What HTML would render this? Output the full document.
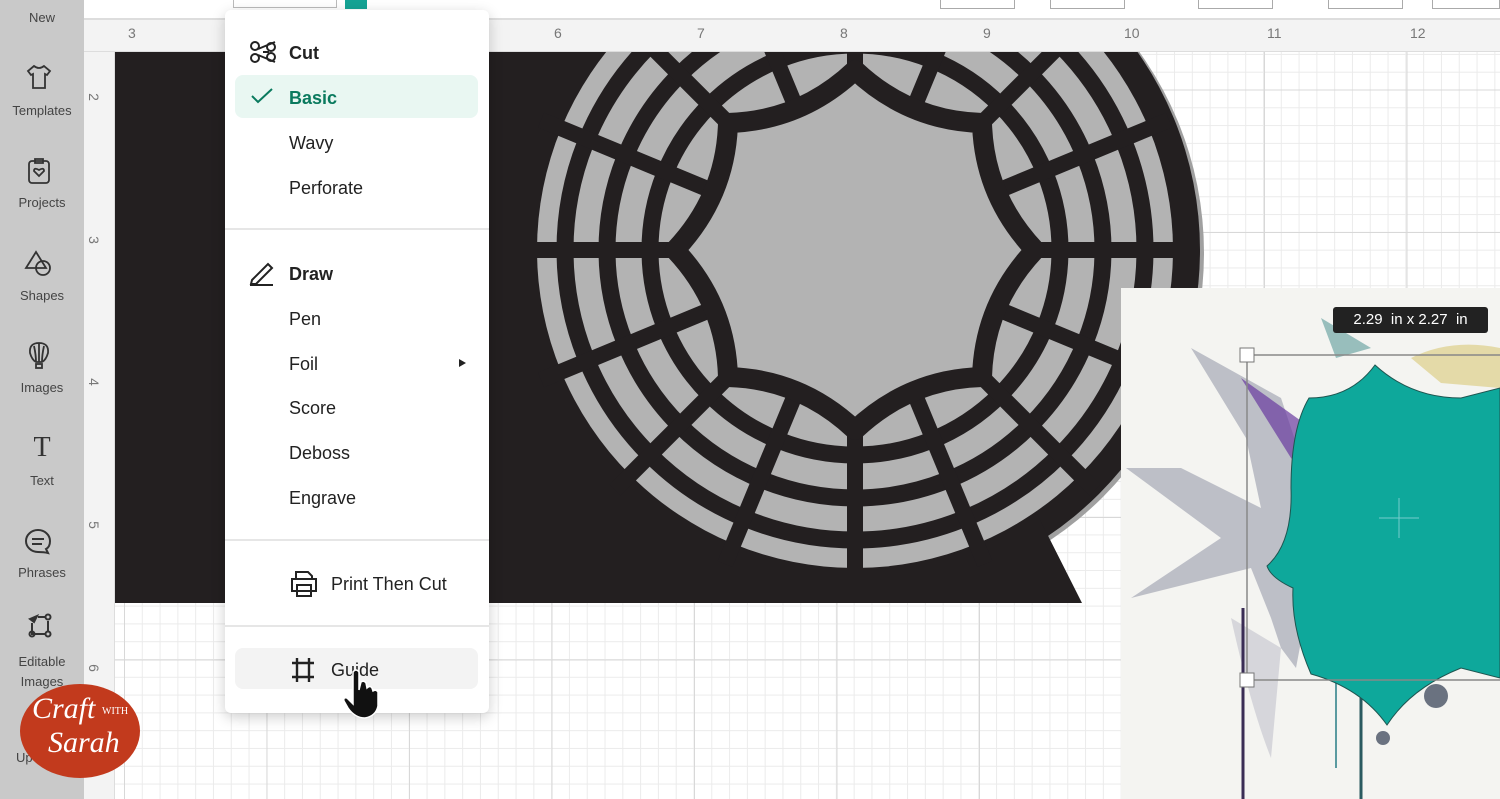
<!DOCTYPE html>
<html><head><meta charset="utf-8"><style>
*{margin:0;padding:0;box-sizing:border-box}
body{width:1500px;height:799px;overflow:hidden;position:relative;font-family:"Liberation Sans",sans-serif;background:#fff}
.canvas{position:absolute;left:115px;top:52px;right:0;bottom:0;
background-color:#fff;
background-image:linear-gradient(to right,#d8d8d8 1px,transparent 1px),linear-gradient(to bottom,#d8d8d8 1px,transparent 1px),linear-gradient(to right,#ebebeb 1px,transparent 1px),linear-gradient(to bottom,#ebebeb 1px,transparent 1px);
background-size:142.5px 142.5px,142.5px 142.5px,17.81px 17.81px,17.81px 17.81px;
background-position:9px 37.5px,9px 37.5px,9px 37.5px,9px 37.5px}
.top{position:absolute;left:84px;top:0;right:0;height:20px;background:#fff;border-bottom:2px solid #ddd}
.rulx{position:absolute;left:84px;top:20px;right:0;height:32px;background:#f3f3f3;border-bottom:1px solid #ddd}
.ruly{position:absolute;left:84px;top:52px;width:31px;bottom:0;background:#f3f3f3;border-right:1px solid #ddd}
.rn{position:absolute;font-size:14px;color:#777}
.ryn{position:absolute;font-size:14px;color:#777;transform:rotate(90deg)}
.side{position:absolute;left:0;top:0;width:84px;height:799px;background:#c9c9c9}
.si{position:absolute;left:0;width:84px;text-align:center;font-size:13px;color:#444}
.menu{position:absolute;left:225px;top:10px;width:264px;height:703px;background:#fff;border-radius:6px;box-shadow:0 4px 14px rgba(0,0,0,.2)}
.mi{position:absolute;left:64px;font-size:18px;color:#222}
.b{font-weight:bold}
.div{position:absolute;left:0;right:0;height:2px;background:#e6e6e6}
.panel{position:absolute;left:1121px;top:288px;width:379px;height:511px;background:#f4f4f1}
</style></head><body>
<div class="canvas"></div>
<svg style="position:absolute;left:0;top:0" width="1500" height="799">
<defs><clipPath id="c"><rect x="115" y="52" width="1385" height="551"/></clipPath></defs>
<g clip-path="url(#c)">
<circle cx="859" cy="253" r="345" fill="#a0a0a0"/>
<circle cx="855" cy="250" r="345" fill="#231f20"/>
<path d="M115 52H1030V500L1082 603H115Z" fill="#231f20"/>
<circle cx="855" cy="250" r="318" fill="#b3b3b3"/>
<g fill="none" stroke="#231f20" stroke-width="17">
<circle cx="855" cy="250" r="205"/>
<circle cx="855" cy="250" r="248"/>
<circle cx="855" cy="250" r="290"/>
</g>
<g stroke="#231f20" stroke-width="16">
<line x1="515" y1="250" x2="1195" y2="250"/>
<line x1="855" y1="-90" x2="855" y2="590"/>
<line x1="615" y1="10" x2="1095" y2="490"/>
<line x1="1095" y1="10" x2="615" y2="490"/>
<line x1="541" y1="120" x2="1169" y2="380"/>
<line x1="541" y1="380" x2="1169" y2="120"/>
<line x1="725" y1="-64" x2="985" y2="564"/>
<line x1="985" y1="-64" x2="725" y2="564"/>
</g>
<path d="M1035 250 Q984 304 982 377 Q909 379 855 430 Q801 379 728 377 Q726 304 675 250 Q726 196 728 123 Q801 121 855 70 Q909 121 982 123 Q984 196 1035 250Z" fill="#b3b3b3" stroke="#231f20" stroke-width="20" stroke-linejoin="round"/>
</g>
</svg>
<div class="top"></div>
<div style="position:absolute;left:233px;top:0;width:104px;height:8px;border:1px solid #bbb;border-top:none;background:#fff"></div>
<div style="position:absolute;left:345px;top:0;width:22px;height:9px;background:#15a394"></div>
<div style="position:absolute;left:940px;top:0;width:75px;height:9px;border:1px solid #aaa;border-top:none"></div>
<div style="position:absolute;left:1050px;top:0;width:75px;height:9px;border:1px solid #aaa;border-top:none"></div>
<div style="position:absolute;left:1198px;top:0;width:75px;height:9px;border:1px solid #aaa;border-top:none"></div>
<div style="position:absolute;left:1328px;top:0;width:75px;height:9px;border:1px solid #aaa;border-top:none"></div>
<div style="position:absolute;left:1432px;top:0;width:68px;height:9px;border:1px solid #aaa;border-top:none"></div>
<div class="rulx">
<span class="rn" style="left:44px;top:5px">3</span>
<span class="rn" style="left:470px;top:5px">6</span>
<span class="rn" style="left:613px;top:5px">7</span>
<span class="rn" style="left:756px;top:5px">8</span>
<span class="rn" style="left:899px;top:5px">9</span>
<span class="rn" style="left:1040px;top:5px">10</span>
<span class="rn" style="left:1183px;top:5px">11</span>
<span class="rn" style="left:1326px;top:5px">12</span>
</div>
<div class="ruly">
<span class="ryn" style="left:6px;top:37px">2</span>
<span class="ryn" style="left:6px;top:180px">3</span>
<span class="ryn" style="left:6px;top:322px">4</span>
<span class="ryn" style="left:6px;top:465px">5</span>
<span class="ryn" style="left:6px;top:608px">6</span>
</div>
<div class="panel">
<svg width="379" height="511" style="position:absolute;left:0;top:0">
<path d="M70 60 L125 150 L140 220 L60 180 L5 180 L100 250 L10 310 L130 280 L150 330 L160 360 L175 380 L190 300 L205 270 L190 200 L160 110Z" fill="#7a7f95" opacity=".45"/>
<path d="M120 90 L170 170 L200 200 L190 140Z" fill="#6a3aa0" opacity=".7"/>
<path d="M110 330 Q130 420 150 470 L160 360Z" fill="#aab" opacity=".4"/>
<line x1="122" y1="320" x2="122" y2="511" stroke="#3a2d55" stroke-width="3"/>
<line x1="240" y1="350" x2="240" y2="511" stroke="#2a5a60" stroke-width="3"/>
<line x1="215" y1="350" x2="215" y2="480" stroke="#5a9aa0" stroke-width="2"/>
<circle cx="315" cy="408" r="12" fill="#6a7280"/>
<circle cx="262" cy="450" r="7" fill="#6a7280"/>
<path d="M290 70 Q330 50 379 60 L379 100 L320 95Z" fill="#d8c878" opacity=".6"/>
<path d="M200 30 L250 60 L215 70Z" fill="#5a9a9a" opacity=".6"/>
<path d="M188 110 Q230 110 254 77 Q290 110 340 110 L379 100 L379 390 L340 380 Q290 400 266 437 Q240 400 190 386 Q170 340 172 300 Q150 290 146 278 Q172 255 170 200 Q170 140 188 110Z" fill="#0ea89b" stroke="#1e5550" stroke-width="1"/>
<line x1="124" y1="67" x2="379" y2="67" stroke="#888" stroke-width="1.5"/>
<line x1="124" y1="392" x2="379" y2="392" stroke="#888" stroke-width="1.5"/>
<line x1="126" y1="67" x2="126" y2="392" stroke="#888" stroke-width="1.5"/>
<rect x="119" y="60" width="14" height="14" fill="#fff" stroke="#777"/>
<rect x="119" y="385" width="14" height="14" fill="#fff" stroke="#777"/>
<line x1="258" y1="230" x2="298" y2="230" stroke="#7cc" stroke-width="1"/>
<line x1="278" y1="210" x2="278" y2="250" stroke="#7cc" stroke-width="1"/>
</svg>
<div style="position:absolute;left:212px;top:19px;width:155px;height:26px;background:#222;border-radius:3px;color:#fff;font-size:15px;line-height:26px;text-align:center">2.29 &nbsp;in x 2.27 &nbsp;in</div>
</div>
<div class="side">
<div class="si" style="top:10px">New</div>
<svg style="position:absolute;left:26px;top:64px" width="26" height="26" fill="none" stroke="#333" stroke-width="1.8"><path d="M8 2 L2 7 L5 11 L7 10 V24 H19 V10 L21 11 L24 7 L18 2 Q13 6 8 2Z"/></svg>
<div class="si" style="top:103px">Templates</div>
<svg style="position:absolute;left:27px;top:157px" width="24" height="28" fill="none" stroke="#333" stroke-width="1.8"><rect x="2" y="4" width="20" height="22" rx="3"/><path d="M8 2H16V6H8Z"/><path d="M12 19 L7 14 Q7 10 12 13 Q17 10 17 14Z"/></svg>
<div class="si" style="top:195px">Projects</div>
<svg style="position:absolute;left:24px;top:250px" width="30" height="28" fill="none" stroke="#333" stroke-width="1.8"><path d="M12 2 L2 18 H22Z"/><circle cx="19" cy="18" r="7"/></svg>
<div class="si" style="top:288px">Shapes</div>
<svg style="position:absolute;left:27px;top:341px" width="24" height="30" fill="none" stroke="#333" stroke-width="1.8"><path d="M12 2 Q2 2 3 12 Q5 19 9 21 H15 Q19 19 21 12 Q22 2 12 2Z M12 2 V21 M7 5 Q9 14 9 21 M17 5 Q15 14 15 21"/><rect x="9" y="23" width="6" height="4"/></svg>
<div class="si" style="top:380px">Images</div>
<div style="position:absolute;left:0;width:84px;top:432px;text-align:center;font-family:'Liberation Serif',serif;font-size:28px;color:#333">T</div>
<div class="si" style="top:473px">Text</div>
<svg style="position:absolute;left:24px;top:527px" width="28" height="28" fill="none" stroke="#333" stroke-width="2"><path d="M22 22 Q26 20 26 14 A12 11 0 1 0 14 25 Q20 25 24 26Z"/><path d="M8 12H20 M8 17H18"/></svg>
<div class="si" style="top:565px">Phrases</div>
<svg style="position:absolute;left:25px;top:611px" width="28" height="28" fill="none" stroke="#333" stroke-width="2"><path d="M5 8 L12 5 L9 11Z" fill="#333"/><path d="M7 12 V23 H20 M23 10 V20 M13 6 H20"/><circle cx="7" cy="23" r="2.5"/><circle cx="23" cy="23" r="2.5"/><circle cx="23" cy="6" r="2.5"/></svg>
<div class="si" style="top:652px;line-height:20px">Editable<br>Images</div>
<div class="si" style="top:750px;text-align:left;left:16px">Up</div>
</div>
<div style="position:absolute;left:20px;top:684px;width:120px;height:94px;border-radius:50%;background:#c23a1d;color:#fff;font-family:'Liberation Serif',serif;font-style:italic;text-align:center">
<div style="font-size:30px;position:absolute;left:12px;top:8px">Craft</div>
<div style="font-size:10px;position:absolute;left:82px;top:22px;font-style:normal">WITH</div>
<div style="font-size:30px;position:absolute;left:28px;top:42px">Sarah</div>
</div>
<div class="menu">
<svg style="position:absolute;left:24px;top:30px" width="28" height="24" fill="none" stroke="#222" stroke-width="2"><circle cx="6" cy="6" r="4"/><circle cx="6" cy="18" r="4"/><path d="M9 9 L26 2 M9 15 L26 22 M14 12 L20 12"/><circle cx="22" cy="7" r="4"/><circle cx="22" cy="17" r="4"/></svg>
<div class="mi b" style="top:33px">Cut</div>
<div style="position:absolute;left:10px;top:65px;width:243px;height:43px;background:#e9f7f2;border-radius:8px"></div>
<svg style="position:absolute;left:26px;top:78px" width="22" height="16" fill="none" stroke="#0a7a5e" stroke-width="2"><path d="M1 8 L7 14 L21 1"/></svg>
<div class="mi b" style="top:78px;color:#0a7a5e">Basic</div>
<div class="mi" style="top:123px">Wavy</div>
<div class="mi" style="top:168px">Perforate</div>
<div class="div" style="top:218px"></div>
<svg style="position:absolute;left:24px;top:250px" width="26" height="26" fill="none" stroke="#222" stroke-width="2"><path d="M3 20 L19 4 L23 8 L7 24 L2 24Z M1 25 H24"/></svg>
<div class="mi b" style="top:254px">Draw</div>
<div class="mi" style="top:299px">Pen</div>
<div class="mi" style="top:344px">Foil</div>
<div style="position:absolute;left:234px;top:349px;width:0;height:0;border-left:7px solid #222;border-top:4px solid transparent;border-bottom:4px solid transparent"></div>
<div class="mi" style="top:388px">Score</div>
<div class="mi" style="top:433px">Deboss</div>
<div class="mi" style="top:478px">Engrave</div>
<div class="div" style="top:529px"></div>
<svg style="position:absolute;left:64px;top:560px" width="30" height="28" fill="none" stroke="#222" stroke-width="2"><path d="M7 9 V2 H19 L23 6 V9 M3 9 H27 V21 H3Z M8 15 H22 V26 H8Z"/></svg>
<div class="mi" style="top:564px;left:106px">Print Then Cut</div>
<div class="div" style="top:615px"></div>
<div style="position:absolute;left:10px;top:638px;width:243px;height:41px;background:#f3f3f3;border-radius:8px"></div>
<svg style="position:absolute;left:66px;top:647px" width="24" height="26" fill="none" stroke="#222" stroke-width="2.4"><path d="M6 1 V25 M18 1 V25 M1 6 H23 M1 20 H23"/></svg>
<div class="mi" style="top:650px;left:106px">Guide</div>
<svg style="position:absolute;left:118px;top:658px" width="40" height="52"><path d="M10 4 Q13 0 16 4 V22 L18 14 Q21 12 23 15 L24 20 Q27 17 29 20 L30 23 Q33 21 35 24 V38 Q33 48 22 50 Q12 50 5 40 L1 33 Q0 29 4 30 L10 36Z" fill="#111" stroke="#fff" stroke-width="1.5"/></svg>
</div>
</body></html>
